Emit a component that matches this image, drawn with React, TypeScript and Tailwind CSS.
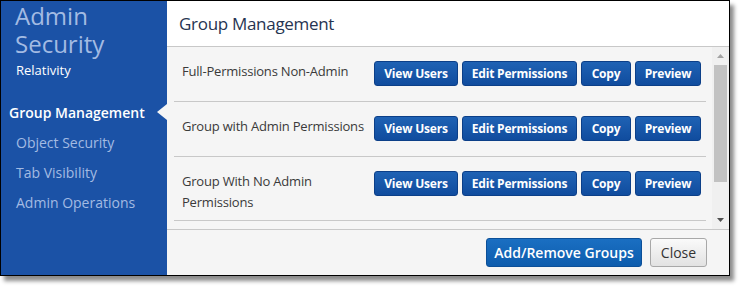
import React from 'react';

const groups = [
    'Full-Permissions Non-Admin',
    'Group with Admin Permissions',
    'Group With No Admin Permissions',
];

const navItems = ['Object Security', 'Tab Visibility', 'Admin Operations'];

function RowButton({ label, width }: { label: string; width: string }) {
    return (
        <button
            className={`${width} h-[25px] rounded-[3px] border border-[#0c3f88] bg-gradient-to-b from-[#1f62b4] to-[#104c9e] text-white text-[12px] font-bold leading-none tracking-[-0.2px]`}
        >
            {label}
        </button>
    );
}

export default function App() {
    return (
        <div className="w-[745px] h-[291px] bg-white" style={{ fontFamily: '"Open Sans", "Liberation Sans", sans-serif' }}>
            <div className="w-[730px] h-[276px] border border-black flex shadow-[4px_5px_4px_rgba(0,0,0,0.45)]">
                {/* Sidebar */}
                <div className="w-[166px] bg-[#1b52a6] flex flex-col">
                    <div className="pl-[14px] pt-[1px] text-[24px] leading-[28px] text-[#a3bbe3]">
                        <div>Admin</div>
                        <div>Security</div>
                    </div>
                    <div className="pl-[15px] mt-[3px] text-[13px] leading-[18px] text-white">Relativity</div>
                    <div className="relative mt-[18px] pl-[8px] h-[30px] flex items-center text-[14px] font-semibold text-white">
                        Group Management
                        <div className="absolute right-0 top-[7px] w-0 h-0 border-y-[8px] border-y-transparent border-r-[10px] border-r-[#f5f5f5]" />
                    </div>
                    {navItems.map((item) => (
                        <div key={item} className="pl-[15px] h-[30px] flex items-center text-[14px] text-[#a3bbe3]">
                            {item}
                        </div>
                    ))}
                </div>

                {/* Main */}
                <div className="flex-1 flex flex-col">
                    <div className="h-[46px] bg-white border-b border-[#c8c8c8] flex items-center pl-[12px] text-[17px] tracking-[-0.3px] text-[#263452]">
                        Group Management
                    </div>

                    <div className="flex-1 bg-[#f5f5f5] flex">
                        <div className="flex-1 pl-[7px] pr-[6px]">
                            {groups.map((g) => (
                                <div key={g} className="flex items-start border-b border-[#c8c8c8] pt-[14px] pb-[7px]">
                                    <div className="flex-1 pl-[8px] pr-[2px] text-[13px] leading-[21px] tracking-[-0.2px] text-[#3a3a3a]">{g}</div>
                                    <div className="flex gap-[4px] pr-[5px] pb-[8px]">
                                        <RowButton label="View Users" width="w-[84px]" />
                                        <RowButton label="Edit Permissions" width="w-[115px]" />
                                        <RowButton label="Copy" width="w-[50px]" />
                                        <RowButton label="Preview" width="w-[66px]" />
                                    </div>
                                </div>
                            ))}
                        </div>
                        {/* Scrollbar */}
                        <div className="w-[17px] bg-[#f0f0f0] flex flex-col items-center">
                            <svg width="9" height="16" viewBox="0 0 9 16" className="mt-[1px]">
                                <path d="M1 10 L4.5 6 L8 10 Z" fill="#a3a3a3" />
                            </svg>
                            <div className="w-[13px] h-[117px] bg-[#c2c2c2] mt-[1px]" />
                            <div className="flex-1" />
                            <svg width="9" height="16" viewBox="0 0 9 16" className="mb-[1px]">
                                <path d="M1 6 L4.5 10 L8 6 Z" fill="#505050" />
                            </svg>
                        </div>
                    </div>

                    <div className="h-[46px] bg-[#f5f5f5] border-t border-[#c8c8c8] flex items-center justify-end gap-[8px] pr-[22px]">
                        <button className="w-[156px] h-[29px] rounded-[3px] border border-[#0b4f98] bg-gradient-to-b from-[#1a6fc2] to-[#0d5cad] text-white text-[14px] font-semibold">
                            Add/Remove Groups
                        </button>
                        <button className="w-[57px] h-[29px] rounded-[3px] border border-[#a8a8a8] bg-gradient-to-b from-[#fafafa] to-[#e2e2e2] text-[#333] text-[14px]">
                            Close
                        </button>
                    </div>
                </div>
            </div>
        </div>
    );
}
